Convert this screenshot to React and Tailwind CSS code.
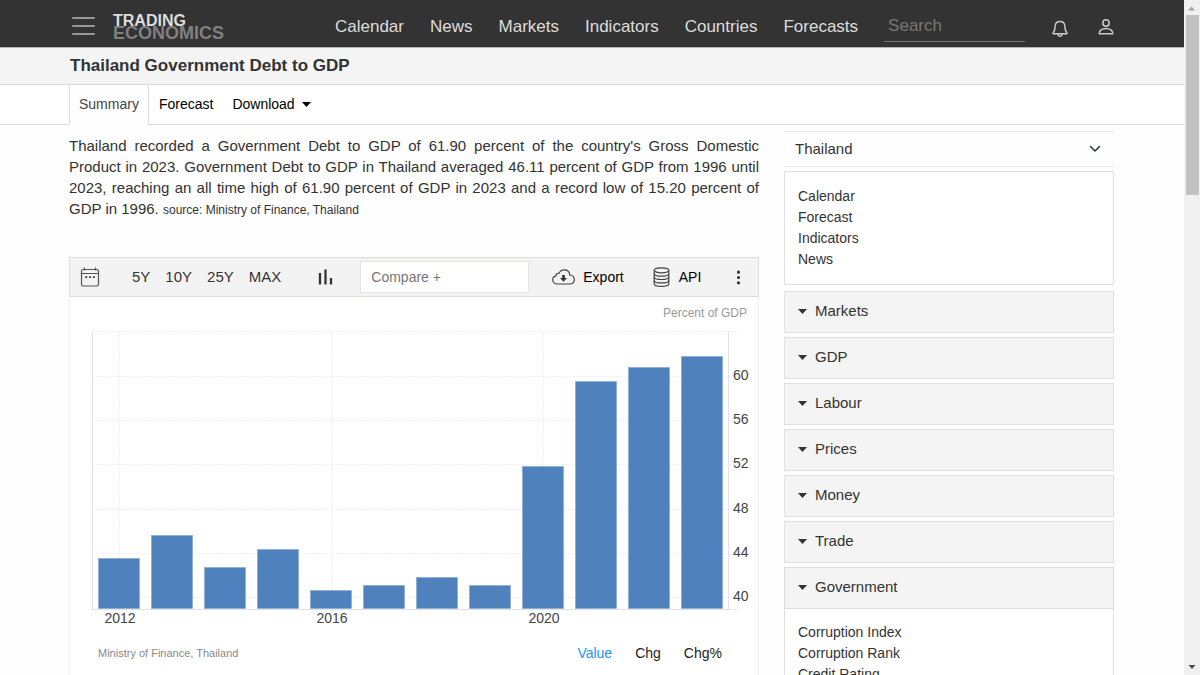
import React from "react";
import { BsThreeDotsVertical } from "react-icons/bs";

const NAV = ["Calendar", "News", "Markets", "Indicators", "Countries", "Forecasts"];
const RANGES = ["5Y", "10Y", "25Y", "MAX"];
const LINKS = ["Calendar", "Forecast", "Indicators", "News"];
const SECTIONS = ["Markets", "GDP", "Labour", "Prices", "Money", "Trade"];
const GOVERNMENT = ["Corruption Index", "Corruption Rank", "Credit Rating"];

const BARS = [
  { year: 2012, top: 261 },
  { year: 2013, top: 238 },
  { year: 2014, top: 270 },
  { year: 2015, top: 252 },
  { year: 2016, top: 293 },
  { year: 2017, top: 288 },
  { year: 2018, top: 280 },
  { year: 2019, top: 288 },
  { year: 2020, top: 169 },
  { year: 2021, top: 84 },
  { year: 2022, top: 70 },
  { year: 2023, top: 59 },
];
const TICKS = [60, 56, 52, 48, 44, 40];
const BAR_STEP = 52.95;
const BASELINE = 311.5;

function Caret() {
  return (
    <svg width="9" height="5" viewBox="0 0 9 5" aria-hidden="true" className="shrink-0 fill-current">
      <path d="M0 0h9L4.500 5z" />
    </svg>
  );
}

function BellIcon() {
  return (
    <svg width="16" height="18" viewBox="0 0 16 18" fill="none" stroke="currentColor" strokeWidth="1.400" strokeLinejoin="round" aria-hidden="true">
      <path d="M8 1.500c-2.900 0-4.700 2-4.900 4.700C3 9.500 2.800 11 1.200 12.600c-.4.500-.2 1.200.5 1.200h12.600c.7 0 .9-.7.5-1.200C13.200 11 13 9.500 12.900 6.200 12.700 3.500 10.900 1.500 8 1.500z" />
      <path d="M6 14c.1 1.600 1 2.400 2 2.400s1.900-.8 2-2.400" />
    </svg>
  );
}

function PersonIcon() {
  return (
    <svg width="16" height="16" viewBox="0 0 16 16" fill="none" stroke="currentColor" strokeWidth="1.500" strokeLinejoin="round" aria-hidden="true">
      <circle cx="8" cy="4" r="3.200" />
      <path d="M1.200 14.800c-.3-3.400 3-5.300 6.800-5.300s7.100 1.900 6.800 5.300z" />
    </svg>
  );
}

function Header() {
  return (
    <header className="h-12 border-b border-[#b5b5b5] bg-[#333]">
      <div className="mx-auto flex h-[47px] max-w-[1046px] items-center">
        <button type="button" aria-label="Menu" className="ml-[3px] flex w-[23px] flex-col gap-1.5 pt-1">
          <span className="h-0.5 w-full rounded bg-[#999]" />
          <span className="h-0.5 w-full rounded bg-[#999]" />
          <span className="h-0.5 w-full rounded bg-[#999]" />
        </button>
        <a href="#" className="ml-[18px] flex w-28 flex-col pt-1.5 font-bold">
          <span className="text-[16px] leading-[13px] text-[#ddd]">TRADING</span>
          <span className="text-[18px] leading-[13px] text-[#808080]">ECONOMICS</span>
        </a>
        <nav className="ml-[110px] flex gap-[26px] pt-1.5 text-[17px] text-[#ddd]">
          {NAV.map((item) => (
            <a key={item} href="#">{item}</a>
          ))}
        </nav>
        <input
          type="search"
          aria-label="Search"
          placeholder="Search"
          className="ml-[26px] mt-2 h-7 w-[141px] border-b border-[#777] bg-transparent px-1 pb-0.5 text-[17px] text-[#ddd] placeholder:text-[#777]"
        />
        <button type="button" aria-label="Alerts" className="ml-auto pt-2.5 text-[#ccc]">
          <BellIcon />
        </button>
        <button type="button" aria-label="Account" className="ml-[30px] mr-px pt-1.5 text-[#ccc]">
          <PersonIcon />
        </button>
      </div>
    </header>
  );
}

function Tabs() {
  return (
    <nav className="h-10 border-b border-[#ddd] bg-white">
      <div className="mx-auto flex h-10 max-w-[1046px] text-[14px] text-black">
        <a href="#" className="flex items-center border-x border-[#ddd] bg-[#fefefe] px-[9px] pb-0.5 text-[#444]">Summary</a>
        <a href="#" className="flex items-center px-2.5 pb-0.5">Forecast</a>
        <button type="button" className="flex items-center gap-[7px] px-[9px] pb-0.5">
          Download <Caret />
        </button>
      </div>
    </nav>
  );
}

function CalendarIcon() {
  return (
    <svg width="20" height="20" viewBox="0 0 20 20" fill="none" stroke="#555" aria-hidden="true">
      <rect x="1.500" y="2.500" width="17" height="16.500" rx="1.800" strokeWidth="1.200" />
      <path d="M1.500 6.500h17M4.500.5v3M15.500.5v3" strokeWidth="1.200" />
      <path d="M5.300 10.200h1.800M9.100 10.200h1.800M12.900 10.200h1.800" stroke="#333" strokeWidth="1.800" />
    </svg>
  );
}

function CloudIcon() {
  return (
    <svg width="23" height="16" viewBox="0 0 23 16" fill="none" stroke="#444" aria-hidden="true">
      <path d="M5.500 15C2.700 15 .7 13.200.7 10.800c0-2.200 1.500-3.700 3.400-4C4.100 5 5.400 4 7 4.300 8 2 9.900.8 12.200.8c3.200 0 5.400 2.200 5.500 5.200 2.700.2 4.600 2 4.600 4.500 0 2.700-2 4.500-4.800 4.500z" strokeWidth="1.200" />
      <path d="M10.200 6h2.600v3h2.200l-3.500 3.700L8 9h2.200z" fill="#333" stroke="none" />
    </svg>
  );
}

function DatabaseIcon() {
  return (
    <svg width="17" height="20" viewBox="0 0 17 20" fill="none" stroke="#444" strokeWidth="1.200" aria-hidden="true">
      <ellipse cx="8.500" cy="3.300" rx="7.300" ry="2.500" />
      <path d="M1.200 3.300v13.400c0 1.500 3.300 2.600 7.300 2.600s7.300-1.100 7.300-2.600V3.300" />
      <path d="M1.200 6.700c0 1.400 3.300 2.500 7.300 2.500s7.300-1.100 7.300-2.500M1.200 10c0 1.400 3.300 2.500 7.300 2.500s7.300-1.100 7.300-2.500M1.200 13.400c0 1.400 3.300 2.500 7.300 2.500s7.300-1.100 7.300-2.500" />
    </svg>
  );
}

function Toolbar() {
  return (
    <div className="flex h-10 items-center border border-[#ddd] bg-[#f3f3f3] text-[14px] text-black">
      <button type="button" aria-label="Pick dates" className="ml-2.5">
        <CalendarIcon />
      </button>
      <div className="ml-8 flex gap-[15px] text-[15px] text-[#333]">
        {RANGES.map((r) => (
          <button key={r} type="button">{r}</button>
        ))}
      </div>
      <button type="button" aria-label="Chart type" className="ml-[37px]">
        <svg width="15" height="16" viewBox="0 0 15 16" stroke="#333" strokeWidth="2.300" aria-hidden="true">
          <path d="M2 4v11.500M7.500.5v15M13 9v6.500" />
        </svg>
      </button>
      <input
        type="text"
        aria-label="Compare"
        placeholder="Compare +"
        className="ml-[27px] h-8 w-[169px] border border-[#e5e5e0] bg-white px-2.5 placeholder:text-[#777]"
      />
      <button type="button" className="ml-[23px] flex items-center gap-2">
        <CloudIcon /> Export
      </button>
      <button type="button" className="ml-[29px] flex items-center gap-[9px]">
        <DatabaseIcon /> API
      </button>
      <button type="button" aria-label="More" className="ml-auto mr-[11px] text-[#333]">
        <BsThreeDotsVertical size={17} />
      </button>
    </div>
  );
}

function Chart() {
  return (
    <svg viewBox="0 0 688 334" role="img" aria-label="Government debt as percent of GDP" className="block w-full">
      <text x="677" y="20" textAnchor="end" fontSize="12" fill="#999">Percent of GDP</text>
      <g stroke="#f0f0f0" strokeDasharray="2 1">
        <path d="M23 34.500H667" />
        {TICKS.map((t, i) => (
          <path key={t} d={`M23 ${79.5 + Math.round(i * 44.2)}H667`} />
        ))}
        {[0, 4, 8].map((i) => (
          <path key={i} d={`M${49.5 + Math.round(i * BAR_STEP)} 34V312`} />
        ))}
      </g>
      <path d="M22.500 34V312M658.500 34V312" stroke="#e2e2e2" />
      <path d="M22 312.500H667" stroke="#e2e2e2" />
      {BARS.map((b, i) => (
        <rect
          key={b.year}
          x={28.5 + Math.round(i * BAR_STEP + 0.4)}
          y={b.top + 0.5}
          width="41"
          height={BASELINE - b.top - 0.5}
          fill="#4f81bc"
          stroke="#7ba0cd"
          strokeWidth="0.500"
        />
      ))}
      <g fontSize="14" fill="#444">
        {TICKS.map((t, i) => (
          <text key={t} x="663" y={83 + Math.round(i * 44.2)}>{t}</text>
        ))}
        {[0, 4, 8].map((i) => (
          <text key={i} x={50 + Math.round(i * BAR_STEP)} y="326" textAnchor="middle">{BARS[i].year}</text>
        ))}
      </g>
    </svg>
  );
}

function Sidebar() {
  return (
    <aside className="w-[330px] shrink-0 pt-1.5 text-[#333]">
      <div className="relative border-y border-[#e8e8ec]">
        <select aria-label="Country" className="h-[34px] w-full appearance-none bg-transparent px-[11px] text-[15px]">
          <option>Thailand</option>
        </select>
        <svg width="12" height="8" viewBox="0 0 12 8" fill="none" stroke="#343a40" strokeWidth="1.600" strokeLinecap="round" strokeLinejoin="round" aria-hidden="true" className="pointer-events-none absolute right-[13px] top-[13px]">
          <path d="M1.500 1.500L6 6l4.500-4.500" />
        </svg>
      </div>
      <ul className="mt-1 border border-[#e0e0e0] bg-white px-[13px] py-3.5 text-[14px] leading-[21px]">
        {LINKS.map((l) => (
          <li key={l}><a href="#">{l}</a></li>
        ))}
      </ul>
      <div className="mt-1.5 flex flex-col gap-1">
        {SECTIONS.map((s) => (
          <button key={s} type="button" className="flex h-[42px] items-center gap-2 border border-[#e0e0e0] bg-[#f4f4f4] px-[13px] pb-px text-[15px]">
            <Caret /> {s}
          </button>
        ))}
        <section>
          <button type="button" className="flex h-[42px] w-full items-center gap-2 border border-[#ddd] bg-[#f4f4f4] px-[13px] pb-px text-[15px]">
            <Caret /> Government
          </button>
          <ul className="border-x border-[#e0e0e0] bg-white px-[13px] py-[13px] text-[14px] leading-[21px]">
            {GOVERNMENT.map((l) => (
              <li key={l}><a href="#">{l}</a></li>
            ))}
          </ul>
        </section>
      </div>
    </aside>
  );
}

function ScrollRail() {
  return (
    <div aria-hidden="true" className="flex w-4 shrink-0 flex-col items-center bg-[#f0f0f0]">
      <svg width="16" height="15" viewBox="0 0 16 15"><path d="M4 10.500h7L7.500 6.500z" fill="#a3a3a3" /></svg>
      <div className="h-[180px] w-[13px] bg-[#c1c1c1]" />
      <svg width="16" height="15" viewBox="0 0 16 15" className="mt-auto"><path d="M4.500 5h7L8 9z" fill="#505050" /></svg>
    </div>
  );
}

export default function App() {
  return (
    <div className="flex h-screen overflow-hidden font-['Liberation_Sans',Arial,sans-serif]">
      <div className="min-w-0 flex-1 overflow-hidden bg-[#fefefe]">
        <Header />
        <div className="border-b border-[#d8d8d8] bg-[#f4f4f4]">
          <h1 className="mx-auto h-9 max-w-[1046px] pl-px text-[17px] font-bold leading-[35px] text-[#333]">
            Thailand Government Debt to GDP
          </h1>
        </div>
        <Tabs />
        <div className="mx-auto flex max-w-[1046px] gap-[25px] pr-px">
          <main className="min-w-0 flex-1 pt-2.5">
            <p className="text-justify text-[15px] leading-[21px] text-[#333]">
              Thailand recorded a Government Debt to GDP of 61.90 percent of the country's Gross Domestic Product in
              2023. Government Debt to GDP in Thailand averaged 46.11 percent of GDP from 1996 until 2023, reaching an
              all time high of 61.90 percent of GDP in 2023 and a record low of 15.20 percent of GDP in 1996.{" "}
              <span className="text-[12px]">source: Ministry of Finance, Thailand</span>
            </p>
            <div className="mt-9">
              <Toolbar />
              <div className="border-x border-[#f0f0f0] bg-white pb-10">
                <Chart />
                <div className="flex items-center pl-7 pr-9 pt-3 text-[14px] leading-5 text-[#222]">
                  <span className="text-[11px] text-[#888]">Ministry of Finance, Thailand</span>
                  <div className="ml-auto flex gap-[23px]">
                    <button type="button" className="text-[#2196f3]">Value</button>
                    <button type="button">Chg</button>
                    <button type="button">Chg%</button>
                  </div>
                </div>
              </div>
            </div>
          </main>
          <Sidebar />
        </div>
      </div>
      <ScrollRail />
    </div>
  );
}
